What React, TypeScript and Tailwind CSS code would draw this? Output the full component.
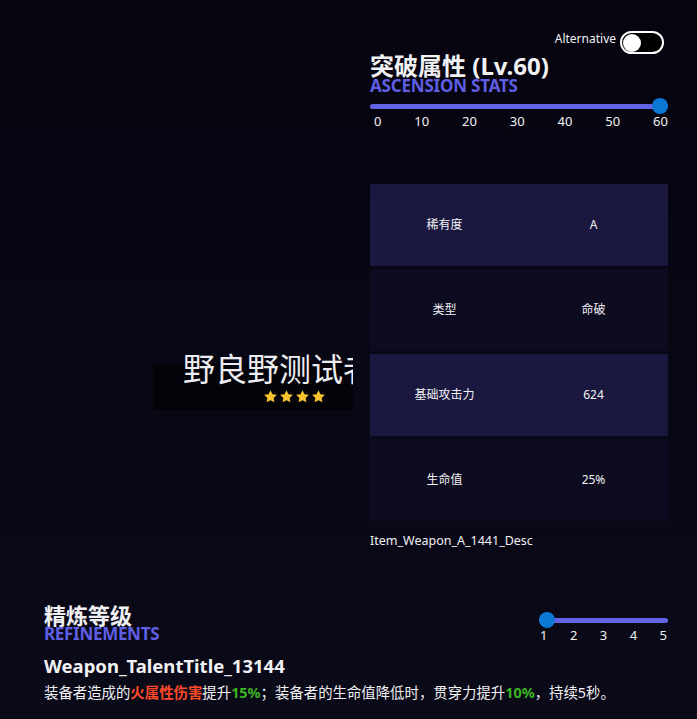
import React from "react";

const FONT = { fontFamily: '"Noto Sans", "Noto Sans CJK SC", sans-serif' };

const STATS = [
  { label: "稀有度", value: "A" },
  { label: "类型", value: "命破" },
  { label: "基础攻击力", value: "624" },
  { label: "生命值", value: "25%" },
];

function Star() {
  return (
    <svg width="15" height="15" viewBox="0 0 24 24">
      <path
        d="M12 1.8l3.1 6.6 7.1.9-5.2 4.9 1.3 7.1L12 17.8l-6.3 3.5 1.3-7.1-5.2-4.9 7.1-.9z"
        fill="#f7c331"
      />
    </svg>
  );
}

export default function App() {
  return (
    <div
      className="w-full h-[719px] overflow-hidden bg-gradient-to-b from-[#05040f] to-[#0b0a19] text-[#f1f1f4]"
      style={FONT}
    >
      <div className="flex">
        {/* weapon name */}
        <div className="w-[370px] shrink-0">
          <div className="ml-[153px] mt-[350px] w-[200px] h-[60px] overflow-hidden relative">
            <div className="absolute left-0 right-0 top-[13px] bottom-0 bg-[#030309]" />
            <div className="absolute left-[30px] -top-[1px] whitespace-nowrap text-[32px] leading-[40px] text-[#ececf1]">
              野良野测试者
            </div>
            <div className="absolute left-[110px] top-[39px] flex gap-px">
              <Star />
              <Star />
              <Star />
              <Star />
            </div>
          </div>
        </div>

        {/* ascension column */}
        <div className="w-[298px] shrink-0 pt-[31px]">
          <div className="flex justify-end items-center gap-1 pr-1">
            <span className="text-[12px] leading-none -mt-[8px]">Alternative</span>
            <div className="w-[44px] h-[23px] rounded-full border-2 border-white bg-black flex items-center px-px">
              <div className="w-[18px] h-[18px] rounded-full bg-white" />
            </div>
          </div>
          <div className="text-[24px] font-bold leading-[26px] -mt-[1px]">突破属性 (Lv.60)</div>
          <div className="text-[17px] font-bold leading-[14px] text-[#5f5fe3] tracking-[-0.2px]">ASCENSION STATS</div>

          <div className="mt-[5px] relative h-[16px] flex items-center">
            <div className="w-full h-[5px] rounded-full bg-[#6363e6]" />
            <div className="absolute right-0 top-0 w-[16px] h-[16px] rounded-full bg-[#0b78d6]" />
          </div>
          <div className="flex justify-between pl-[4px] text-[13px] leading-[14px]">
            {["0", "10", "20", "30", "40", "50", "60"].map((n) => (
              <span key={n}>{n}</span>
            ))}
          </div>

          <div className="mt-[56px] flex flex-col gap-[3px]">
            {STATS.map((s, i) => (
              <div
                key={s.label}
                className={`h-[82px] grid grid-cols-2 items-center text-center text-[12px] ${
                  i % 2 === 0 ? "bg-[#1b1840]" : "bg-[#0d0b1f]"
                }`}
              >
                <span>{s.label}</span>
                <span>{s.value}</span>
              </div>
            ))}
          </div>
          <div className="mt-[12px] text-[12.5px] leading-[16px]">Item_Weapon_A_1441_Desc</div>
        </div>
      </div>

      {/* refinements */}
      <div className="mt-[54px] pl-[44px] pr-[29px]">
        <div className="flex justify-between items-start">
          <div>
            <div className="text-[22px] font-bold leading-[24px]">精炼等级</div>
            <div className="text-[17px] font-bold leading-[14px] text-[#5f5fe3] tracking-[-0.3px]">REFINEMENTS</div>
          </div>
          <div className="w-[129px] mt-[9px]">
            <div className="relative h-[16px] flex items-center">
              <div className="w-full h-[5px] rounded-full bg-[#6363e6]" />
              <div className="absolute left-0 top-0 w-[16px] h-[16px] rounded-full bg-[#0b78d6]" />
            </div>
            <div className="flex justify-between px-[1px] text-[13px] leading-[14px]">
              {["1", "2", "3", "4", "5"].map((n) => (
                <span key={n}>{n}</span>
              ))}
            </div>
          </div>
        </div>
        <div className="mt-[13px] text-[18.5px] font-bold leading-[22px]">Weapon_TalentTitle_13144</div>
        <div className="mt-[7px] text-[14.4px] leading-[18px] whitespace-nowrap">
          装备者造成的<span className="text-[#ff4a2a] font-bold">火属性伤害</span>提升
          <span className="text-[#3cb521] font-bold">15%</span>；装备者的生命值降低时，贯穿力提升
          <span className="text-[#3cb521] font-bold">10%</span>，持续5秒。
        </div>
      </div>
    </div>
  );
}
